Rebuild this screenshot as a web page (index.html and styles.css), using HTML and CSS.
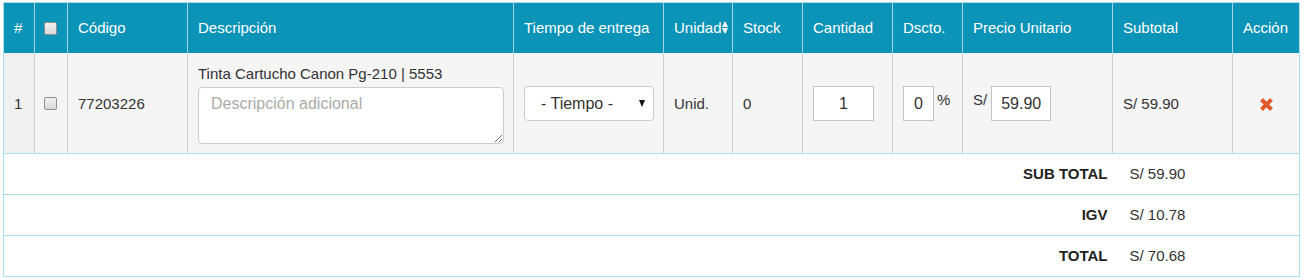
FILE: index.html
```html
<!DOCTYPE html>
<html>
<head>
<meta charset="utf-8">
<title>Detalle de cotización</title>
<link rel="stylesheet" href="styles.css">
</head>
<body>

<table class="detalle">
  <colgroup>
    <col style="width:31px">
    <col style="width:33px">
    <col style="width:120px">
    <col style="width:326px">
    <col style="width:150px">
    <col style="width:69px">
    <col style="width:70px">
    <col style="width:90px">
    <col style="width:70px">
    <col style="width:150px">
    <col style="width:120px">
    <col style="width:67px">
  </colgroup>
  <thead>
    <tr>
      <th>#</th>
      <th><input type="checkbox" class="chk"></th>
      <th>Código</th>
      <th>Descripción</th>
      <th>Tiempo de entrega</th>
      <th class="sortable">Unidad<span class="sort"></span></th>
      <th>Stock</th>
      <th>Cantidad</th>
      <th>Dscto.</th>
      <th>Precio Unitario</th>
      <th>Subtotal</th>
      <th>Acción</th>
    </tr>
  </thead>
  <tbody>
    <tr class="item">
      <td class="num">1</td>
      <td><input type="checkbox" class="chk"></td>
      <td>77203226</td>
      <td class="desc">
        <div>Tinta Cartucho Canon Pg-210 | 5553</div>
        <textarea placeholder="Descripción adicional"></textarea>
      </td>
      <td>
        <span class="select-wrap">
          <select class="tiempo">
            <option>- Tiempo -</option>
            <option>24 horas</option>
            <option>48 horas</option>
          </select>
        </span>
      </td>
      <td>Unid.</td>
      <td>0</td>
      <td><input type="text" class="inp cant" value="1"></td>
      <td><input type="text" class="inp dscto" value="0"><span class="unit pct">%</span></td>
      <td><span class="unit">S/</span><input type="text" class="inp precio" value="59.90"></td>
      <td>S/ 59.90</td>
      <td class="accion">
        <svg width="15" height="15" viewBox="0 0 15 15">
          <path d="M2.5 2.5 L12.5 12.5 M12.5 2.5 L2.5 12.5" stroke="#e05a2b" stroke-width="4" fill="none"/>
        </svg>
      </td>
    </tr>
  </tbody>
  <tfoot>
    <tr>
      <td colspan="10" class="label">SUB TOTAL</td>
      <td colspan="2" class="monto">S/ 59.90</td>
    </tr>
    <tr>
      <td colspan="10" class="label">IGV</td>
      <td colspan="2" class="monto">S/ 10.78</td>
    </tr>
    <tr>
      <td colspan="10" class="label">TOTAL</td>
      <td colspan="2" class="monto">S/ 70.68</td>
    </tr>
  </tfoot>
</table>

</body>
</html>
```

FILE: styles.css
```css
body {
  margin: 2px 5px 0 3px;
  font-family: "Liberation Sans", Arial, Helvetica, sans-serif;
  font-size: 15px;
  line-height: 20px;
  color: #333333;
}

.detalle {
  width: 1297px;
  table-layout: fixed;
  border-collapse: collapse;
  border: 1px solid #a9dfee;
}

.detalle th {
  background: #0b93b8;
  color: #ffffff;
  font-weight: normal;
  text-align: left;
  padding: 15px 10px;
  border-left: 1px solid #a3d3e2;
  border-top: 1px solid #a9dfee;
  white-space: nowrap;
  overflow: hidden;
}

.detalle th:first-child {
  border-left: 1px solid #a9dfee;
}

.sortable {
  position: relative;
}

.sort {
  position: absolute;
  right: 4px;
  top: 18px;
  width: 0;
  height: 0;
  border-left: 3px solid transparent;
  border-right: 3px solid transparent;
  border-bottom: 6px solid #ffffff;
}

.sort:after {
  content: "";
  position: absolute;
  left: -3px;
  top: 7px;
  border-left: 3px solid transparent;
  border-right: 3px solid transparent;
  border-top: 6px solid #ffffff;
}

.item td {
  background: #f5f5f5;
  padding: 10px 10px 9px;
  vertical-align: middle;
  border-left: 1px solid #cfcfcf;
  white-space: nowrap;
}

.item td:first-child {
  border-left: 1px solid #a9dfee;
}

.item td.num {
  background: #f0f0f0;
}

.chk {
  -webkit-appearance: none;
  appearance: none;
  display: block;
  margin: 0 0 0 -1px;
  width: 13px;
  height: 13px;
  border: 1px solid #8f8f8f;
  border-radius: 2px;
  background: linear-gradient(#f2f2f2, #d8d8d8);
}

.desc div {
  margin-top: 1px;
}

textarea {
  display: block;
  box-sizing: border-box;
  width: 306px;
  height: 57px;
  margin-top: 3px;
  padding: 6px 12px;
  border: 1px solid #cccccc;
  border-radius: 4px;
  background: #ffffff;
  font-family: "Liberation Sans", Arial, Helvetica, sans-serif;
  font-size: 16px;
  line-height: 20px;
  color: #333333;
}

textarea::placeholder {
  color: #aaaaaa;
}

.select-wrap {
  position: relative;
  display: inline-block;
}

.select-wrap:after {
  content: "";
  position: absolute;
  right: 9px;
  top: 14px;
  border-left: 3px solid transparent;
  border-right: 3px solid transparent;
  border-top: 7px solid #111111;
  pointer-events: none;
}

.tiempo {
  -webkit-appearance: none;
  appearance: none;
  display: block;
  box-sizing: border-box;
  width: 130px;
  height: 35px;
  padding: 0 0 0 16px;
  border: 1px solid #cccccc;
  border-radius: 4px;
  background: #ffffff;
  font-family: "Liberation Sans", Arial, Helvetica, sans-serif;
  font-size: 16px;
  color: #333333;
}

.inp {
  box-sizing: border-box;
  height: 35px;
  padding: 0 6px;
  border: 1px solid #c4c4c4;
  border-radius: 0;
  background: #ffffff;
  font-family: "Liberation Sans", Arial, Helvetica, sans-serif;
  font-size: 16px;
  color: #333333;
  text-align: center;
  vertical-align: middle;
}

.cant {
  width: 61px;
}

.dscto {
  width: 31px;
  padding: 0 4px;
}

.precio {
  width: 60px;
  padding: 0 4px;
  margin-left: 4px;
}

.unit {
  display: inline-block;
  vertical-align: middle;
  margin-top: -8px;
}

.pct {
  margin-left: 3px;
}

.accion {
  text-align: center;
}

.accion svg {
  display: inline-block;
  vertical-align: middle;
}

.detalle tfoot td {
  background: #ffffff;
  padding: 10px;
  border-top: 1px solid #a9dfee;
}

.detalle tfoot td.label {
  text-align: right;
  font-weight: bold;
  color: #222222;
  padding-right: 5px;
}

.detalle tfoot td.monto {
  padding-left: 17px;
}
```
